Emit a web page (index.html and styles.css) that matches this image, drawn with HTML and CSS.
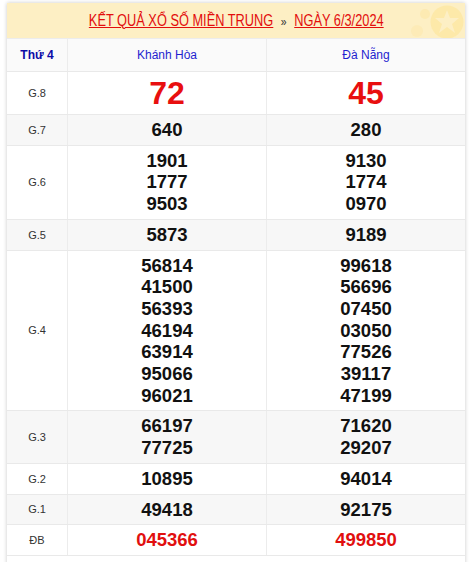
FILE: index.html
```html
<!DOCTYPE html>
<html lang="vi">
<head>
<meta charset="utf-8">
<link rel="stylesheet" href="styles.css">
</head>
<body>
<div class="page">
  <div class="box">
    <div class="title">
      <span class="title-text"><a class="link">KẾT QUẢ XỔ SỐ MIỀN TRUNG</a> <span class="sep">»</span> <a class="link">NGÀY 6/3/2024</a></span>
      <svg class="deco" width="60" height="36" viewBox="0 0 60 36">
        <circle cx="42" cy="17" r="16.5" fill="#fde7a2" opacity="0.8"/>
        <polygon points="42,5 45,13 54,13 47,19 50,28 42,22 34,28 37,19 30,13 39,13" fill="#fdf0c8" opacity="0.9"/>
        <circle cx="20" cy="9" r="5" fill="#fde6a0" opacity="0.5"/>
        <circle cx="12" cy="26" r="6" fill="#fde6a0" opacity="0.35"/>
      </svg>
    </div>
    <div class="row head">
      <div class="c lbl day">Thứ 4</div>
      <div class="c prov">Khánh Hòa</div>
      <div class="c prov">Đà Nẵng</div>
    </div>
    <div class="row">
      <div class="c lbl">G.8</div>
      <div class="c num big">72</div>
      <div class="c num big">45</div>
    </div>
    <div class="row alt">
      <div class="c lbl">G.7</div>
      <div class="c num">640</div>
      <div class="c num">280</div>
    </div>
    <div class="row">
      <div class="c lbl">G.6</div>
      <div class="c num">1901<br>1777<br>9503</div>
      <div class="c num">9130<br>1774<br>0970</div>
    </div>
    <div class="row alt">
      <div class="c lbl">G.5</div>
      <div class="c num">5873</div>
      <div class="c num">9189</div>
    </div>
    <div class="row">
      <div class="c lbl">G.4</div>
      <div class="c num">56814<br>41500<br>56393<br>46194<br>63914<br>95066<br>96021</div>
      <div class="c num">99618<br>56696<br>07450<br>03050<br>77526<br>39117<br>47199</div>
    </div>
    <div class="row alt">
      <div class="c lbl">G.3</div>
      <div class="c num">66197<br>77725</div>
      <div class="c num">71620<br>29207</div>
    </div>
    <div class="row">
      <div class="c lbl">G.2</div>
      <div class="c num">10895</div>
      <div class="c num">94014</div>
    </div>
    <div class="row alt">
      <div class="c lbl">G.1</div>
      <div class="c num">49418</div>
      <div class="c num">92175</div>
    </div>
    <div class="row">
      <div class="c lbl">ĐB</div>
      <div class="c num red">045366</div>
      <div class="c num red">499850</div>
    </div>
  </div>
</div>
</body>
</html>
```

FILE: styles.css
```css
html, body {
  margin: 0;
  padding: 0;
  background: #fff;
}
body {
  font-family: "Liberation Sans", Arial, sans-serif;
}
.page {
  padding: 3px 4px 0 7px;
}
.box {
  background: #fff;
  box-shadow: 0 0 4px rgba(0, 0, 0, 0.22);
  padding-bottom: 12px;
}
.title {
  position: relative;
  height: 35px;
  background: #fdefc4;
  display: flex;
  align-items: center;
  justify-content: center;
  overflow: hidden;
}
.title-text {
  display: inline-block;
  font-size: 16px;
  transform: scaleX(0.8);
  white-space: nowrap;
}
.link {
  color: #e30d0d;
  text-decoration: underline;
}
.sep {
  color: #333;
  font-size: 13px;
  margin: 0 5px;
}
.deco {
  position: absolute;
  right: 0;
  top: 2px;
}
.row {
  display: grid;
  grid-template-columns: 60px 1fr 1fr;
  border-bottom: 1px solid #e9e9e9;
}
.row.alt {
  background: #f7f7f7;
}
.row.head {
  background: #fafafa;
  border-top: 1px solid #ececec;
}
.c {
  display: flex;
  align-items: center;
  justify-content: center;
  text-align: center;
  border-left: 1px solid #ececec;
}
.c:first-child {
  border-left: none;
}
.head .c {
  height: 32px;
}
.lbl {
  font-size: 11px;
  color: #333;
}
.day {
  font-weight: bold;
  color: #0b0ba6;
  font-size: 12px;
}
.prov {
  font-size: 12px;
  color: #1f1fd0;
}
.num {
  font-weight: bold;
  font-size: 18.5px;
  line-height: 21.7px;
  padding: 4px 0;
  color: #111;
}
.num.big {
  font-size: 32px;
  line-height: 34px;
  color: #e80f0f;
}
.num.red {
  color: #e10f0f;
}
```
